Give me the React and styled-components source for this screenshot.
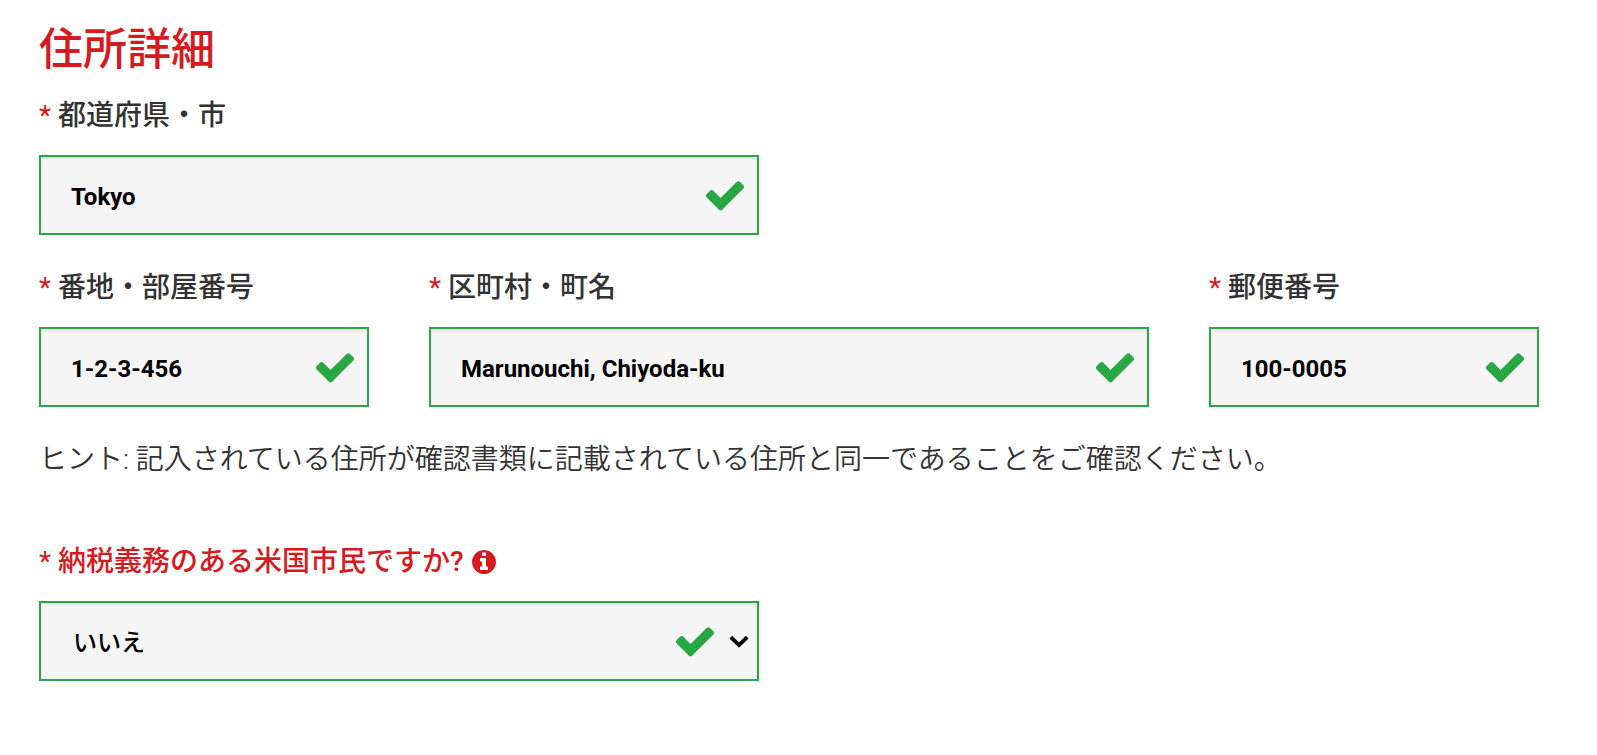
import { useState } from 'react';
import styled, { createGlobalStyle } from 'styled-components';

const GlobalStyle = createGlobalStyle`
  *,
  *::before,
  *::after {
    box-sizing: border-box;
  }
  body {
    margin: 0;
    background: #fff;
    color: #333;
    font-family: Roboto, 'Noto Sans CJK JP', sans-serif;
    font-size: 28px;
    line-height: 42px;
  }
`;

const FormStyles = styled.form`
  padding: 20px 58px 60px 39px;

  h1 {
    margin: 0 0 15px;
    color: #d71920;
    font-size: 44px;
    font-weight: 500;
    line-height: 60px;
  }
`;

const FieldGrid = styled.div`
  display: grid;
  grid-template-columns: repeat(4, minmax(0, 1fr));
  gap: 32px 60px;

  @media (max-width: 768px) {
    grid-template-columns: minmax(0, 1fr);
  }
`;

const FieldCell = styled.div`
  grid-column: ${({ $span }) => ($span ? `1 / span ${$span}` : 'auto')};

  @media (max-width: 768px) {
    grid-column: auto;
  }
`;

const WideCell = styled(FieldCell)`
  grid-column: span 2;

  @media (max-width: 768px) {
    grid-column: auto;
  }
`;

const LabelRow = styled.div`
  display: flex;
  align-items: center;
  gap: 6px;
  margin-bottom: 18px;
  color: ${({ $alert }) => ($alert ? '#d71920' : '#333')};

  label {
    font-weight: 500;
  }
`;

const Required = styled.span`
  color: #d71920;
  font-weight: 400;
`;

const InfoButton = styled.button`
  display: flex;
  padding: 0;
  border: 0;
  background: none;
  color: inherit;
  cursor: pointer;
`;

const ControlBox = styled.div`
  position: relative;

  input,
  select {
    display: block;
    width: 100%;
    height: 80px;
    margin: 0;
    padding: 3px 68px 0 30px;
    border: 2px solid #28a745;
    border-radius: 0;
    background: #f5f5f5;
    box-shadow: inset 0 2px 2px rgba(0, 0, 0, 0.08);
    color: #000;
    font-family: inherit;
    font-size: 24px;
    font-weight: 700;
    outline: 0;
    appearance: none;
  }
  select {
    padding: 3px 98px 0 32px;
    font-weight: 500;
  }
`;

const Marks = styled.span`
  position: absolute;
  top: 0;
  right: ${({ $select }) => ($select ? '10px' : '12px')};
  bottom: 0;
  display: flex;
  align-items: center;
  gap: 12px;
  color: #28a745;
  pointer-events: none;
`;

const Hint = styled.p`
  margin: 32px 0 60px;
  font-weight: 350;
`;

const CheckIcon = () => (
  <svg width='44' height='44' viewBox='0 0 1792 1792' fill='currentColor' aria-hidden='true'>
    <path d='M1671 566q0 40-28 68l-724 724-136 136q-28 28-68 28t-68-28l-136-136-362-362q-28-28-28-68t28-68l136-136q28-28 68-28t68 28l294 295 656-657q28-28 68-28t68 28l136 136q28 28 28 68z' />
  </svg>
);

const InfoIcon = () => (
  <svg width='28' height='28' viewBox='0 0 1792 1792' fill='currentColor' aria-hidden='true'>
    <path d='M1152 1376v-160q0-14-9-23t-23-9h-96v-512q0-14-9-23t-23-9h-320q-14 0-23 9t-9 23v160q0 14 9 23t23 9h96v320h-96q-14 0-23 9t-9 23v160q0 14 9 23t23 9h448q14 0 23-9t9-23zm-128-896v-160q0-14-9-23t-23-9h-192q-14 0-23 9t-9 23v160q0 14 9 23t23 9h192q14 0 23-9t9-23zm640 416q0 209-103 385.5t-279.5 279.5-385.5 103-385.5-103-279.5-279.5-103-385.5 103-385.5 279.5-279.5 385.5-103 385.5 103 279.5 279.5 103 385.5z' />
  </svg>
);

const ChevronIcon = () => (
  <svg width='20' height='14' viewBox='0 0 20 14' fill='none' aria-hidden='true'>
    <path d='M1.8 3.2L10 11.2l8.2-8' stroke='#000' strokeWidth='3.8' />
  </svg>
);

const FieldLabel = ({ id, text, alert, children }) => (
  <LabelRow $alert={alert}>
    <label htmlFor={id}>
      <Required>*</Required> {text}
    </label>
    {children}
  </LabelRow>
);

const TextField = ({ id, label, initial }) => {
  const [value, setValue] = useState(initial);

  return (
    <>
      <FieldLabel id={id} text={label} />
      <ControlBox>
        <input
          id={id}
          type='text'
          required
          value={value}
          onChange={(e) => setValue(e.target.value)}
        />
        {value && (
          <Marks>
            <CheckIcon />
          </Marks>
        )}
      </ControlBox>
    </>
  );
};

const App = () => (
  <>
    <GlobalStyle />
    <FormStyles lang='ja'>
      <h1>住所詳細</h1>
      <FieldGrid>
        <FieldCell $span={2}>
          <TextField id='city' label='都道府県・市' initial='Tokyo' />
        </FieldCell>
        <FieldCell $span={1}>
          <TextField id='building' label='番地・部屋番号' initial='1-2-3-456' />
        </FieldCell>
        <WideCell>
          <TextField
            id='street'
            label='区町村・町名'
            initial='Marunouchi, Chiyoda-ku'
          />
        </WideCell>
        <FieldCell>
          <TextField id='postcode' label='郵便番号' initial='100-0005' />
        </FieldCell>
      </FieldGrid>
      <Hint>
        ヒント: 記入されている住所が確認書類に記載されている住所と同一であることをご確認ください。
      </Hint>
      <FieldGrid>
        <FieldCell $span={2}>
          <FieldLabel id='us-citizen' text='納税義務のある米国市民ですか?' alert>
            <InfoButton type='button' aria-label='詳細情報'>
              <InfoIcon />
            </InfoButton>
          </FieldLabel>
          <ControlBox>
            <select id='us-citizen' defaultValue='no'>
              <option value='no'>いいえ</option>
              <option value='yes'>はい</option>
            </select>
            <Marks $select>
              <CheckIcon />
              <ChevronIcon />
            </Marks>
          </ControlBox>
        </FieldCell>
      </FieldGrid>
    </FormStyles>
  </>
);

export default App;
